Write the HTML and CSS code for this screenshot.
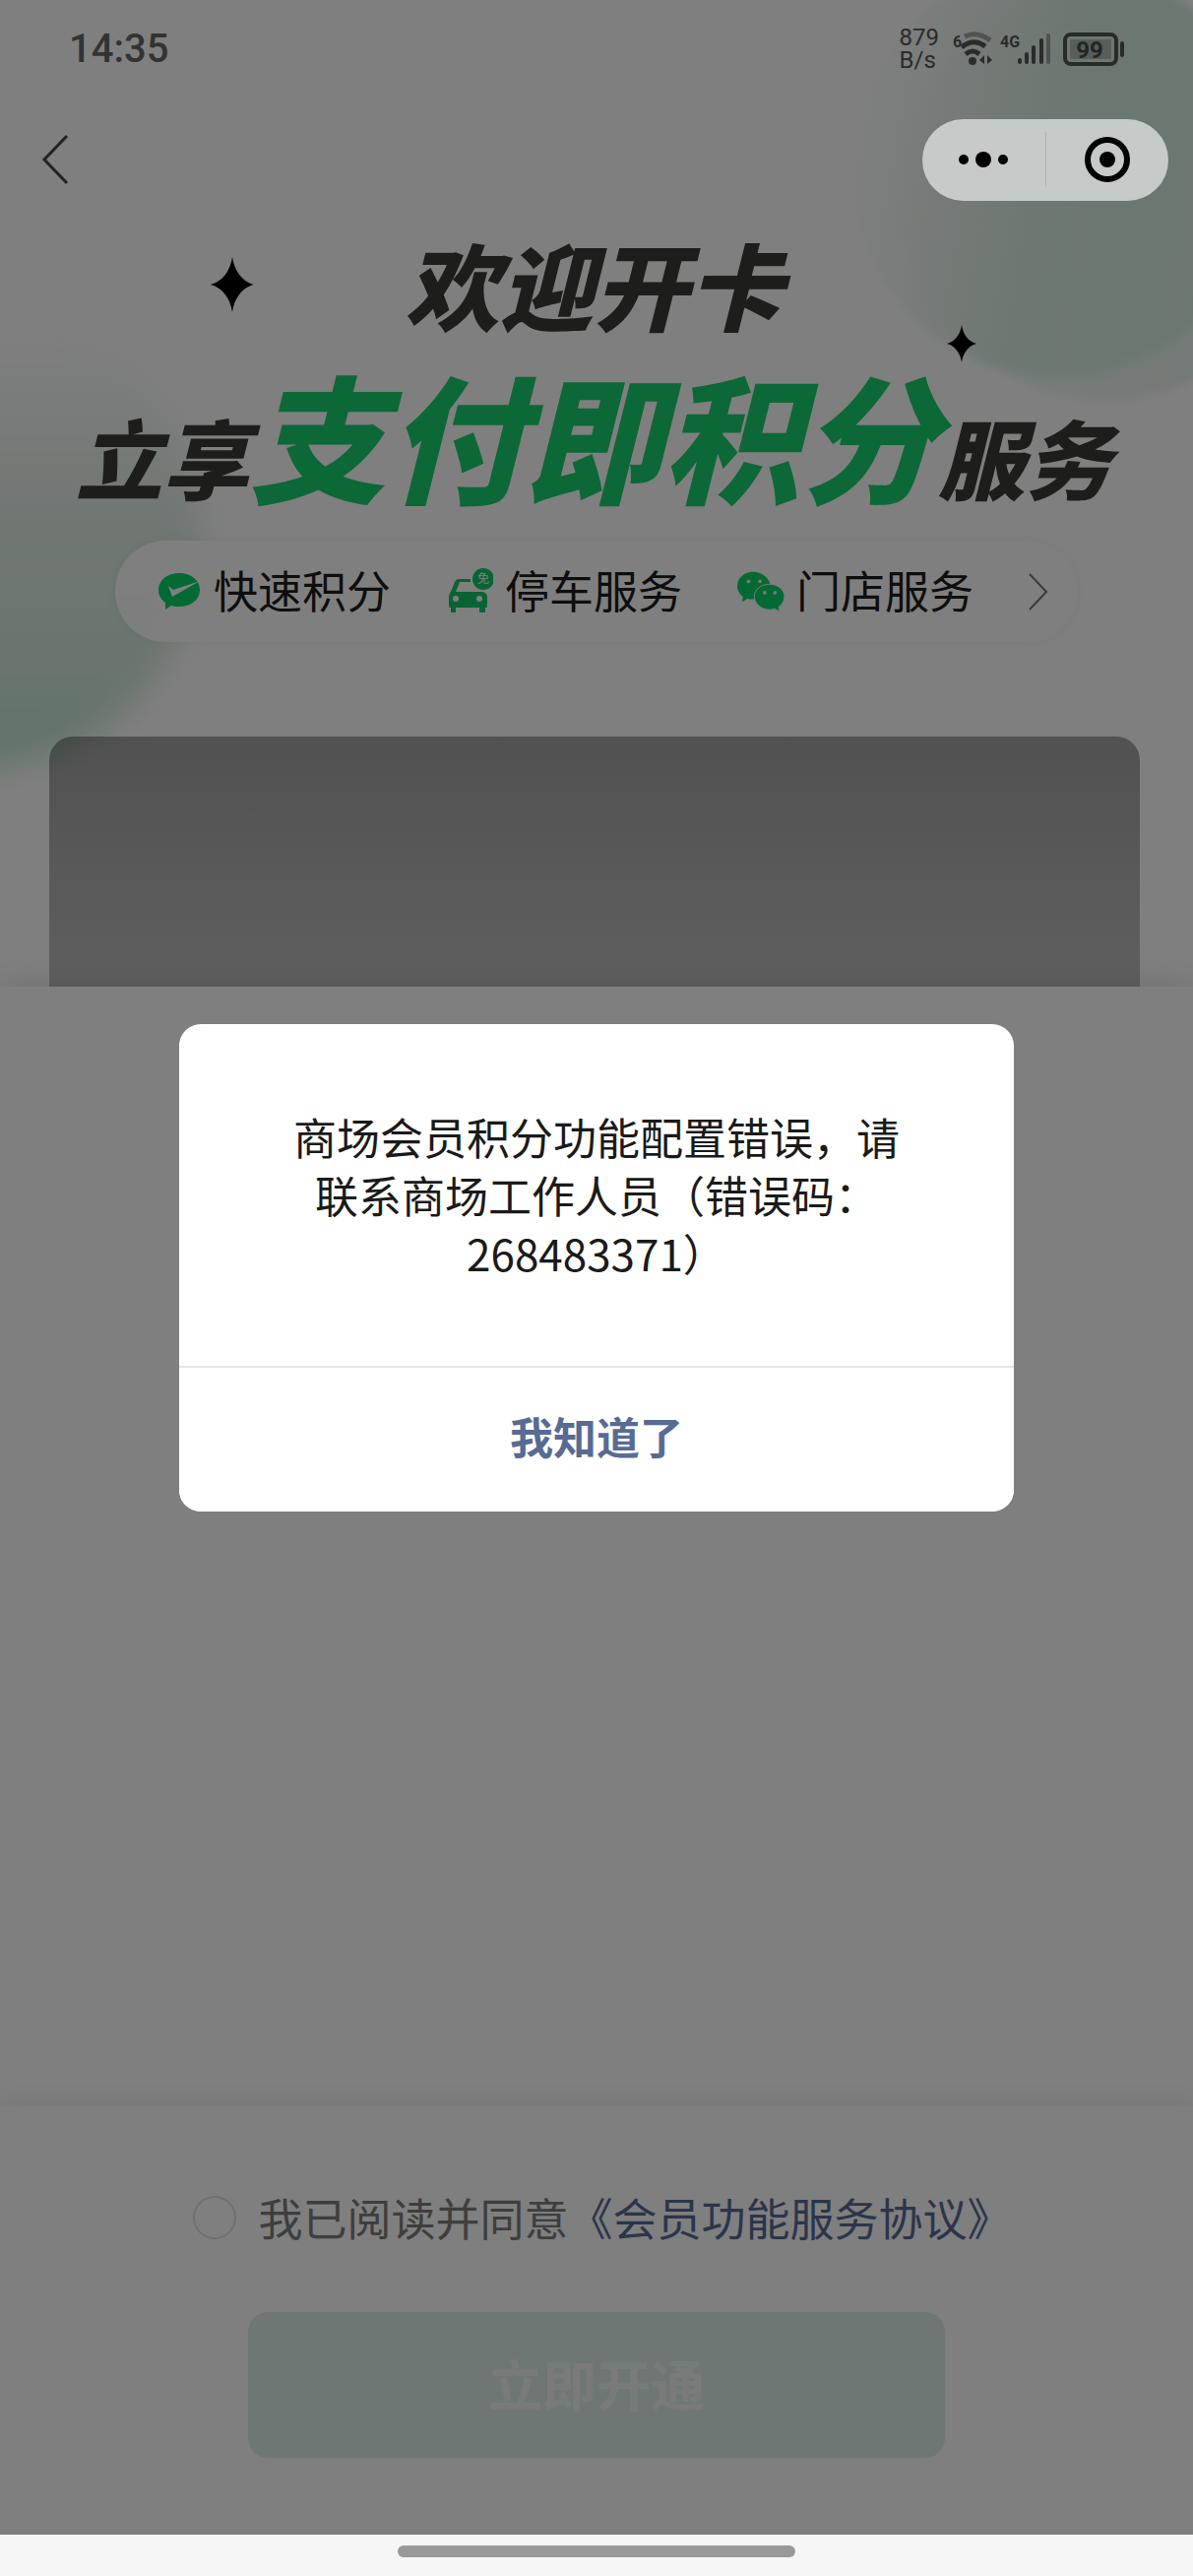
FILE: index.html
```
<!DOCTYPE html>
<html lang="zh-CN">
<head>
  <meta charset="UTF-8">
  <meta name="viewport" content="width=device-width, initial-scale=1.0">
  <title>欢迎开卡</title>
  <link rel="stylesheet" href="styles.css">
</head>
<body>
  <div class="app">
    <div class="bubble bubble-right-back"></div>
    <div class="bubble bubble-right"></div>
    <div class="bubble bubble-left"></div>

    <!-- status bar -->
    <div class="status-bar">
      <span class="time">14:35</span>
      <div class="status-icons">
        <div class="net-speed"><span>879</span><span>B/s</span></div>
        <svg width="42" height="36" viewBox="0 0 42 36">
          <text class="tiny" x="0" y="16">6</text>
          <g fill="none" stroke-width="5">
            <path d="M12 5 Q25 -1 38 9" stroke="#a0a8a3"/>
            <path d="M9 16 Q21 6 33 15" stroke="#505854"/>
            <path d="M13 23 Q20 17 27 23" stroke="#505854"/>
          </g>
          <circle cx="20" cy="30" r="4" fill="#505854"/>
          <path d="M32 24v9l-5-4zM35 24v9l5-4z" fill="#505854"/>
        </svg>
        <svg width="54" height="36" viewBox="0 0 54 36">
          <text class="tiny" x="0" y="16">4G</text>
          <g stroke-width="4" stroke-linecap="round" stroke="#505854">
            <path d="M20 29v2M27 23v8M34 16v15M42 9v22"/>
            <path d="M49 4v27" stroke="#9da5a0"/>
          </g>
        </svg>
        <svg class="battery" width="64" height="36" viewBox="0 0 64 36">
          <rect x="2" y="3" width="52" height="30" rx="6" fill="none" stroke="#4e5852" stroke-width="4"/>
          <rect x="7" y="8" width="42" height="20" fill="#b3bcb6"/>
          <text x="27" y="27" text-anchor="middle">99</text>
          <path d="M60 12v12" stroke="#4e5852" stroke-width="4" stroke-linecap="round"/>
        </svg>
      </div>
    </div>

    <div class="nav-bar">
      <button class="icon-btn" aria-label="返回">
        <svg width="28" height="52" viewBox="0 0 28 52">
          <path d="M26 2 L3 26 L26 50" fill="none" stroke="#222" stroke-width="3"/>
        </svg>
      </button>
      <div class="capsule">
        <button class="icon-btn" aria-label="更多">
          <svg width="50" height="48" viewBox="0 0 50 48">
            <circle cx="5" cy="24" r="5"/><circle cx="25" cy="24" r="8"/><circle cx="45" cy="24" r="5"/>
          </svg>
        </button>
        <button class="icon-btn" aria-label="关闭">
          <svg width="48" height="48" viewBox="0 0 48 48">
            <circle cx="24" cy="24" r="20" fill="none" stroke="#000" stroke-width="6"/>
            <circle cx="24" cy="24" r="8"/>
          </svg>
        </button>
      </div>
    </div>

    <!-- banner -->
    <div class="banner">
      <svg class="star star-left" viewBox="0 0 44 56"><path d="M22 0C24 14 32 25 44 28C32 31 24 42 22 56C20 42 12 31 0 28C12 25 20 14 22 0z"/></svg>
      <svg class="star star-right" viewBox="0 0 44 56"><path d="M22 0C24 14 32 25 44 28C32 31 24 42 22 56C20 42 12 31 0 28C12 25 20 14 22 0z"/></svg>
      <h1>
        <span class="title-top">欢迎开卡</span>
        <span class="title-main">立享<em>支付即积分</em>服务</span>
      </h1>

      <div class="services">
        <a href="#">
          <svg width="48" height="48" viewBox="0 0 48 48" fill="#0bd369">
            <path d="M25 7C13 7 4 14 4 24c0 6 3 10 7 13v7l6-4c3 1 5 1 8 1 12 0 21-7 21-17S37 7 25 7z"/>
            <path d="M14 20l5 4 27-9-28 16z" fill="#fff"/>
          </svg>
          快速积分
        </a>
        <a href="#">
          <svg width="48" height="48" viewBox="0 0 48 48" fill="#12c964">
            <path d="M9 16c1-2 2-3 4-3h12v3H14l-4 10h28c3 1 4 3 4 6v8c0 2-1 2-2 2v5h-6v-5H10v5H5v-5c-2 0-2-1-2-2v-8c0-3 1-5 2-6z"/>
            <circle cx="10" cy="33" r="3" fill="#fff"/>
            <circle cx="34" cy="33" r="3" fill="#fff"/>
            <circle cx="38" cy="13" r="11"/>
            <text x="38" y="17" text-anchor="middle">免</text>
          </svg>
          停车服务
        </a>
        <a href="#">
          <svg width="48" height="48" viewBox="0 0 50 48" fill="#0bd369">
            <path d="M17 5C7 5 0 12 0 20c0 5 3 9 6 11l-1 6 6-4c2 1 4 1 8 1 9-1 16-7 16-14S27 5 17 5z"/>
            <path d="M34 18c-9 0-16 6-16 13s7 14 16 14c2 0 4 0 5-1l6 3-1-5c3-2 6-6 6-11 0-7-7-13-16-13z" stroke="#fff" stroke-width="1"/>
            <g fill="#e8f5ee">
              <circle cx="12" cy="15" r="2"/><circle cx="24" cy="15" r="2"/>
              <circle cx="29" cy="27" r="2"/><circle cx="40" cy="27" r="2"/>
            </g>
          </svg>
          门店服务
        </a>
        <svg class="more" width="20" height="38" viewBox="0 0 20 38">
          <path d="M1 1 L18 19 L1 37" fill="none" stroke="#777" stroke-width="2"/>
        </svg>
      </div>
    </div>

    <div class="card"></div>
    <div class="sheet"></div>

    <div class="footer">
      <div class="agree">
        <input type="checkbox" id="agree">
        <label for="agree">我已阅读并同意</label><a href="#">《会员功能服务协议》</a>
      </div>
      <button class="open-btn">立即开通</button>
    </div>

    <div class="mask">
      <div class="modal" role="dialog">
        <p>商场会员积分功能配置错误，请联系商场工作人员（错误码：268483371）</p>
        <button>我知道了</button>
      </div>
    </div>
  </div>

  <div class="home-bar"><span></span></div>
</body>
</html>
```

FILE: styles.css
```
* {
  box-sizing: border-box;
}
body {
  margin: 0;
  min-height: 100vh;
  display: flex;
  flex-direction: column;
  font-family: "Noto Sans CJK SC", sans-serif;
  background-color: #f6f6f6;
}
button {
  font-family: inherit;
  border: none;
  cursor: pointer;
}
a {
  text-decoration: none;
}
svg {
  display: block;
  flex: none;
}
.app {
  position: relative;
  flex: 1;
  display: flex;
  flex-direction: column;
  overflow: hidden;
  background-color: #fff;
}

/* background bubbles */
.bubble {
  position: absolute;
  border-radius: 50%;
  filter: blur(4px);
}
.bubble-right {
  top: -38px;
  right: -72px;
  width: 420px;
  height: 420px;
  background: linear-gradient(100deg, rgba(214, 240, 226, 0) 5%, #d8efe3 55%, #d4efe0 100%);
}
.bubble-right-back {
  top: -13px;
  right: -120px;
  width: 420px;
  height: 420px;
  background: linear-gradient(100deg, rgba(238, 246, 242, 0) 0%, #eef6f2 50%, #e2f3ea 100%);
}
.bubble-left {
  top: 310px;
  left: -265px;
  width: 470px;
  height: 470px;
  filter: blur(16px);
  background: linear-gradient(180deg, rgba(220, 235, 226, 0) 5%, #e2efe8 45%, #d6ebdf 75%, #c0e8ce 100%);
}

/* status bar */
.status-bar {
  position: relative;
  display: flex;
  justify-content: space-between;
  align-items: center;
  height: 100px;
  padding: 0 68px 0 70px;
  color: #666;
}
.time {
  font: 500 40px/48px Roboto, sans-serif;
}
.status-icons {
  display: flex;
  align-items: center;
  gap: 6px;
}
.net-speed {
  display: flex;
  flex-direction: column;
  margin-right: 8px;
  font: 24px/23px Roboto, sans-serif;
  color: #555;
}
.tiny {
  font: bold 16px Roboto, sans-serif;
  fill: #505854;
}
.battery {
  margin-left: 4px;
}
.battery text {
  font: bold 24px Roboto, sans-serif;
  fill: #444e48;
}

/* navigation */
.nav-bar {
  position: relative;
  z-index: 3;
  display: flex;
  justify-content: space-between;
  align-items: center;
  height: 124px;
  padding: 0 25px 0 42px;
}
.icon-btn {
  padding: 0;
  background: none;
}
.capsule {
  display: flex;
  align-items: center;
  width: 250px;
  height: 83px;
  border-radius: 42px;
  background-color: #c6cac8;
}
.capsule .icon-btn {
  flex: 1;
  display: flex;
  justify-content: center;
  align-items: center;
  height: 56px;
}
.capsule .icon-btn + .icon-btn {
  border-left: 1px solid #adb1af;
}

/* banner */
.banner {
  position: relative;
  display: flex;
  flex-direction: column;
  align-items: center;
  padding-top: 14px;
}
.star {
  position: absolute;
}
.star-left {
  top: 37px;
  left: 214px;
  width: 44px;
  height: 56px;
}
.star-right {
  top: 105px;
  right: 220px;
  width: 30px;
  height: 40px;
}
h1 {
  display: flex;
  flex-direction: column;
  align-items: center;
  gap: 32px;
  margin: 0;
  padding-right: 6px;
  font-weight: 900;
  font-style: italic;
  color: #3a3a37;
  white-space: nowrap;
}
.title-top {
  font-size: 96px;
  line-height: 100px;
}
.title-main {
  font-size: 88px;
  line-height: 140px;
}
.title-main em {
  font-size: 140px;
  color: #1ad06e;
}
.services {
  display: flex;
  align-items: center;
  gap: 56px;
  height: 103px;
  margin-top: 16px;
  padding: 0 30px 0 40px;
  border-radius: 52px;
  background-color: rgba(255, 255, 255, 0.9);
  box-shadow: 0 0 12px rgba(0, 0, 0, 0.05);
}
.services a {
  display: flex;
  align-items: center;
  gap: 12px;
  padding-bottom: 4px;
  font-size: 45px;
  line-height: 60px;
  color: #1c1c1c;
}
.services text {
  font-size: 12px;
  fill: #fff;
}

.card {
  position: relative;
  height: 254px;
  margin: 96px 54px 0 50px;
  border-radius: 24px 24px 0 0;
  background: linear-gradient(rgba(0, 0, 0, 0.36), rgba(0, 0, 0, 0.25));
}
.sheet {
  position: relative;
  flex: 1;
  background-color: #fefefe;
  box-shadow: 0 0 32px rgba(0, 0, 0, 0.15);
}

/* agreement and submit */
.footer {
  position: relative;
  display: flex;
  flex-direction: column;
  align-items: center;
  gap: 66px;
  padding: 83px 0 78px;
  background-color: #fff;
  box-shadow: 0 0 24px rgba(0, 0, 0, 0.1);
}
.agree {
  display: flex;
  align-items: center;
  padding-left: 12px;
  font-size: 45px;
  line-height: 60px;
  color: #7c7c7c;
}
.agree input {
  appearance: none;
  width: 44px;
  height: 44px;
  margin: 0 22px 0 0;
  border: 2px solid #dedede;
  border-radius: 50%;
}
.agree a {
  color: #576b95;
}
.open-btn {
  width: 708px;
  max-width: 90%;
  height: 148px;
  padding-bottom: 8px;
  border-radius: 20px;
  font-size: 55px;
  font-weight: bold;
  color: #f2f6f4;
  background-color: #dcefe6;
}

/* dialog */
.mask {
  position: absolute;
  inset: 0;
  z-index: 2;
  display: flex;
  justify-content: center;
  align-items: center;
  background-color: rgba(0, 0, 0, 0.5);
}
.modal {
  width: 70%;
  border-radius: 22px;
  background-color: #fff;
  overflow: hidden;
  text-align: center;
}
.modal p {
  margin: 0;
  padding: 85px 112px;
  font-size: 44px;
  line-height: 59px;
  color: #1a1a1a;
}
.modal button {
  width: 100%;
  height: 148px;
  padding-bottom: 8px;
  border-top: 2px solid #e5e5e5;
  font-size: 44px;
  font-weight: bold;
  color: #576b95;
  background-color: #fff;
}

.home-bar {
  display: flex;
  justify-content: center;
  padding: 11px 0 19px;
}
.home-bar span {
  width: 404px;
  height: 12px;
  border-radius: 6px;
  background-color: #999;
}
```
